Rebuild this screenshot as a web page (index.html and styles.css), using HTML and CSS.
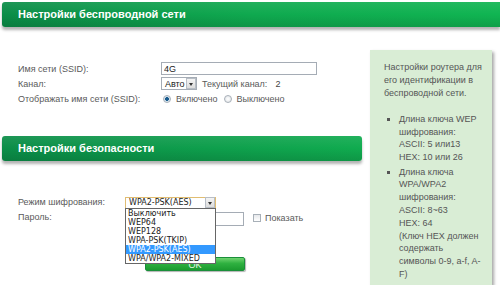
FILE: index.html
```html
<!DOCTYPE html>
<html lang="ru">
<head>
  <meta charset="UTF-8" />
  <title>Настройки беспроводной сети</title>
  <link rel="stylesheet" href="styles.css">
</head>
<body>
  <div class="bar bar-wide">Настройки беспроводной сети</div>

  <div class="content">
    <div class="main">
      <div class="form wireless">
        <div class="row">
          <label class="label">Имя сети (SSID):</label>
          <input class="text ssid" type="text" value="4G" />
        </div>
        <div class="row">
          <label class="label">Канал:</label>
          <span class="select channel">Авто<span class="arrow"></span></span>
          <span class="current">Текущий канал:</span>
          <span class="current-num">2</span>
        </div>
        <div class="row">
          <label class="label">Отображать имя сети (SSID):</label>
          <span class="radio checked"></span><span class="opt">Включено</span>
          <span class="radio"></span><span class="opt">Выключено</span>
        </div>
      </div>

      <div class="bar bar-short">Настройки безопасности</div>

      <div class="form security">
        <div class="row">
          <label class="label">Режим шифрования:</label>
          <div class="dropdown">
            <span class="select mode">WPA2-PSK(AES)<span class="arrow"></span></span>
            <ul class="options">
              <li>Выключить</li>
              <li>WEP64</li>
              <li>WEP128</li>
              <li>WPA-PSK(TKIP)</li>
              <li class="active">WPA2-PSK(AES)</li>
              <li>WPA/WPA2-MIXED</li>
            </ul>
          </div>
        </div>
        <div class="row">
          <label class="label">Пароль:</label>
          <input class="text pass" type="password" />
          <span class="check"></span><span class="opt">Показать</span>
        </div>
        <div class="actions">
          <button class="ok">OK</button>
        </div>
      </div>
    </div>

    <div class="aside">
      <p>Настройки роутера для его идентификации в беспроводной сети.</p>
      <ul>
        <li>Длина ключа WEP шифрования:<br>ASCII: 5 или13<br>HEX: 10 или 26</li>
        <li>Длина ключа WPA/WPA2 шифрования:<br>ASCII: 8~63<br>HEX: 64<br>(Ключ HEX должен содержать символы 0-9, a-f, A-F)</li>
      </ul>
    </div>
  </div>
</body>
</html>
```

FILE: styles.css
```css
* {
  box-sizing: border-box;
  margin: 0;
  padding: 0;
}

body {
  font-family: 'Liberation Sans', Arial, sans-serif;
  font-size: 9px;
  color: #5a5a5a;
  background: #ffffff;
  width: 500px;
  overflow: hidden;
}

.bar {
  height: 25px;
  line-height: 25px;
  padding-left: 16px;
  color: #ffffff;
  font-size: 11px;
  font-weight: bold;
  background:
    linear-gradient(to bottom, rgba(255,255,255,0.08) 0%, rgba(255,255,255,0) 50%, rgba(0,0,0,0.12) 100%),
    linear-gradient(to right, #0b8d48, #0fa94f 50%, #10b552);
  box-shadow: 0 3px 3px rgba(0,0,0,0.3);
}

.bar-wide {
  margin: 2px 0 0 2px;
  border-radius: 3px 0 0 3px;
}

.bar-short {
  width: 360px;
  margin-left: 2px;
  border-radius: 3px;
  background:
    linear-gradient(to bottom, rgba(255,255,255,0.08) 0%, rgba(255,255,255,0) 50%, rgba(0,0,0,0.12) 100%),
    linear-gradient(to right, #0b8d48, #10ab4f);
}

.content {
  display: flex;
}

.main {
  width: 370px;
}

.form {
  padding-left: 18px;
}

.wireless {
  padding-top: 34px;
  padding-bottom: 30px;
}

.security {
  padding-top: 33px;
  position: relative;
}

.row {
  display: flex;
  align-items: center;
  height: 15px;
}

.wireless .label {
  width: 143px;
}

.security .label {
  width: 107px;
}

.text {
  height: 13px;
  border: 1px solid #a5acb5;
  font-family: 'Liberation Sans', Arial, sans-serif;
  font-size: 9px;
  color: #222;
  padding: 0 2px;
  outline: none;
}

.ssid {
  width: 156px;
}

.pass {
  width: 119px;
  margin-top: 4px;
  height: 14px;
}

.select {
  display: flex;
  align-items: center;
  height: 13px;
  border: 1px solid #a5acb5;
  padding-left: 3px;
  color: #222;
  background: #fff;
}

.arrow {
  width: 10px;
  height: 11px;
  margin-left: auto;
  border: 1px solid #b8bec6;
  background: linear-gradient(#f4f4f4, #dcdcdc);
  position: relative;
}

.arrow::after {
  content: '';
  position: absolute;
  left: 2px;
  top: 4px;
  border-left: 2px solid transparent;
  border-right: 2px solid transparent;
  border-top: 3px solid #333;
}

.channel {
  width: 36px;
}

.current {
  margin-left: 5px;
}

.current-num {
  margin-left: 8px;
  color: #444;
}

.radio {
  width: 8px;
  height: 8px;
  border-radius: 50%;
  border: 1px solid #a8b0b8;
  background: radial-gradient(#ffffff, #dde1e5);
  margin-left: 2px;
  margin-right: 5px;
}

.radio.checked {
  background: radial-gradient(#1a5c8e 0 1.6px, #d9e6f0 2.2px);
}

.opt + .radio {
  margin-left: 6px;
}

.dropdown {
  position: relative;
  font-family: 'DejaVu Sans', Verdana, sans-serif;
  font-size: 8px;
}

.mode {
  width: 91px;
  border-color: #e0bd72;
  height: 12px;
  margin-top: 2px;
}

.options {
  position: absolute;
  left: 0;
  top: 13px;
  width: 91px;
  list-style: none;
  background: #fff;
  border: 1px solid #666;
  z-index: 2;
  color: #222;
}

.options li {
  height: 9px;
  line-height: 9px;
  padding-left: 2px;
}

.options li.active {
  background: #3399ff;
  color: #ffffff;
}

.check {
  width: 8px;
  height: 8px;
  border: 1px solid #a8b0b8;
  background: linear-gradient(#e6e8eb, #ffffff);
  margin: 2px 4px 0 9px;
}

.security .row:nth-child(2) .opt {
  margin-top: 2px;
}

.actions {
  padding: 33px 0 0 127px;
}

.ok {
  width: 100px;
  height: 14px;
  padding-top: 2px;
  border: 1px solid #1a8f3a;
  border-radius: 2px;
  background: linear-gradient(#6fd36f, #2fb140 45%, #1b9a2f);
  color: #eaf7ea;
  font-family: 'Liberation Sans', Arial, sans-serif;
  font-size: 9px;
  line-height: 9px;
  box-shadow: 1px 1px 1px rgba(0,0,0,0.3);
}

.aside {
  width: 122px;
  margin-top: 23px;
  height: 235px;
  padding: 11px 10px 0 14px;
  background: #d9edd5;
  box-shadow: 2px 2px 3px rgba(0,0,0,0.35);
  line-height: 12.8px;
  color: #555;
}

.aside p {
  margin-right: -3px;
}

.aside ul {
  margin-top: 13.5px;
  padding-left: 15px;
  list-style: square;
}

.aside li + li {
  margin-top: 1.5px;
}
```
